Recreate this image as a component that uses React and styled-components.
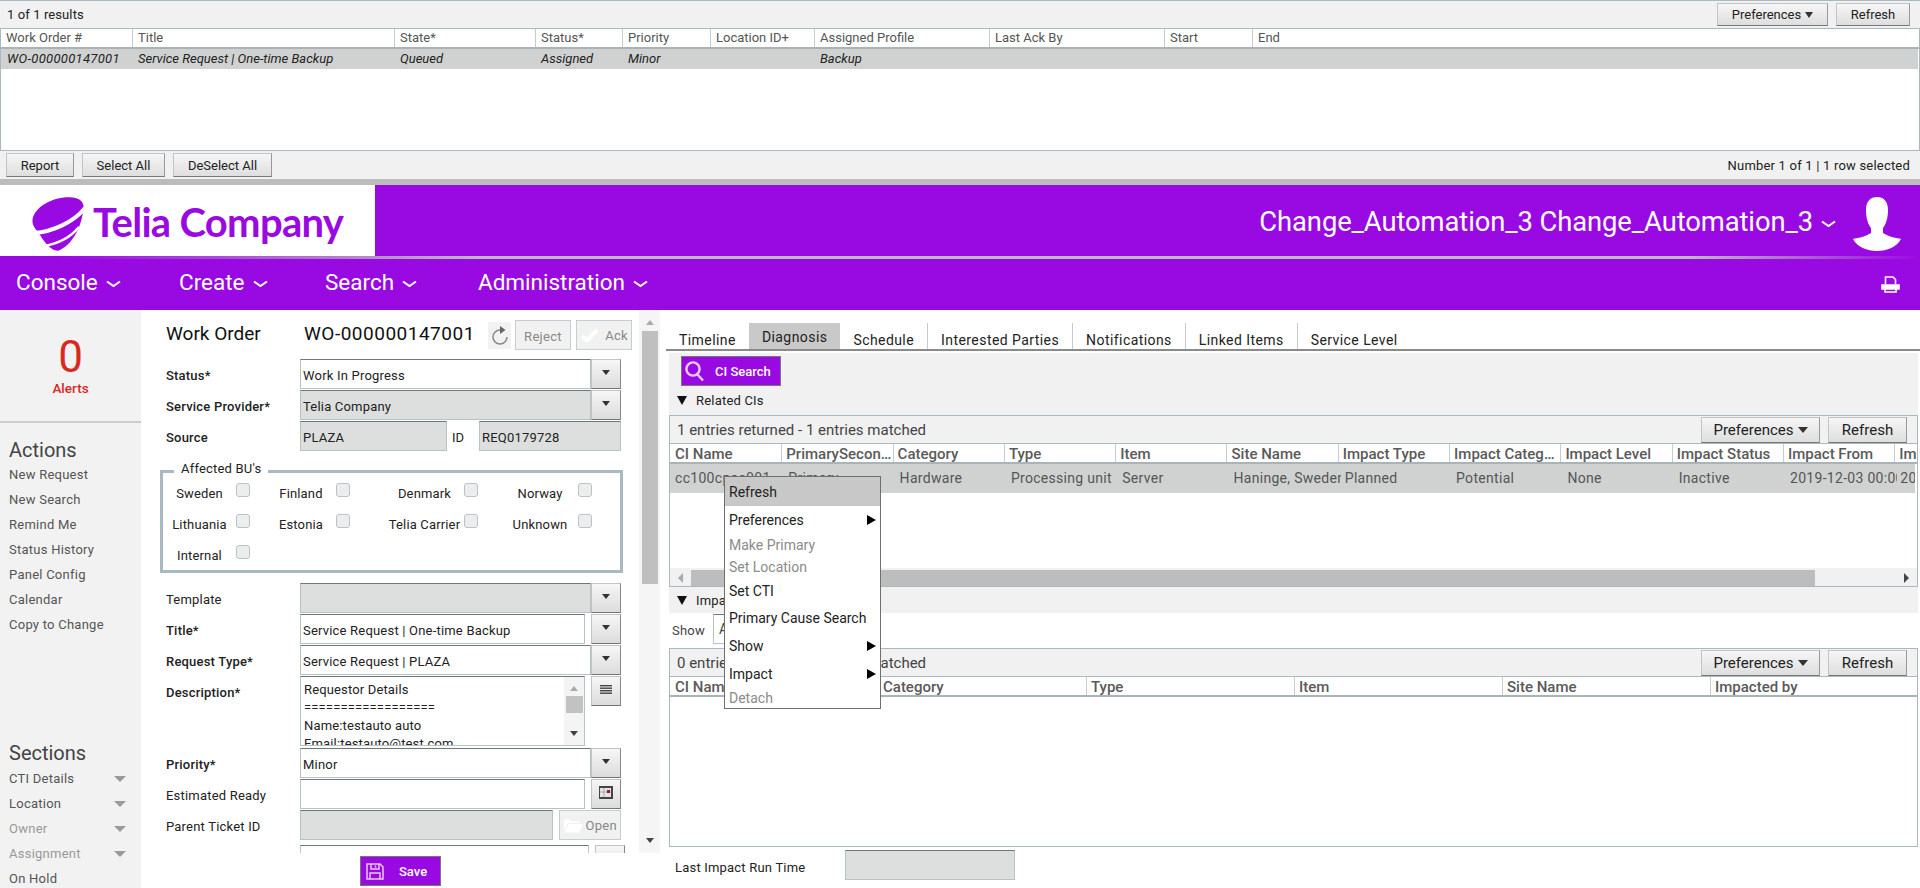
import styled, { createGlobalStyle } from 'styled-components';

const PURPLE = '#990ae3';

const GlobalStyle = createGlobalStyle`
  html, body { margin: 0; padding: 0; height: 888px; overflow: hidden; background: #fff; }
  body { font-family: Roboto, "Liberation Sans", sans-serif; font-size: 13px; color: #222; }
  * { box-sizing: border-box; }
`;

const Page = styled.div`
  width: 1920px;
  height: 888px;
  display: flex;
  flex-direction: column;
  overflow: hidden;
`;

/* results list on top */
const ResultsPanel = styled.section`
  height: 179px;
  display: flex;
  flex-direction: column;
  border-top: 1px solid #aab8c0;
`;

const ResultsBar = styled.div`
  height: 28px;
  flex: none;
  display: flex;
  align-items: center;
  justify-content: space-between;
  padding: 0 10px 0 7px;
  background: #f1f1f1;
  border-bottom: 1px solid #aab8c0;
  letter-spacing: 0.1px;
`;

const Buttons = styled.div`
  display: flex;
  gap: ${(p) => p.$gap || 8}px;
`;

const Button = styled.button`
  height: ${(p) => p.$h || 23}px;
  width: ${(p) => p.$w}px;
  padding: 0;
  font: ${(p) => p.$fs || 13}px Roboto, sans-serif;
  color: #222;
  background: linear-gradient(#f6f6f6, #dedede);
  border: 1px solid #c4c4c4;
  border-bottom-color: #777;
  border-right-color: #999;
  display: flex;
  align-items: center;
  justify-content: center;
  gap: 4px;
`;

const Caret = styled.span`
  display: inline-block;
  width: 0;
  height: 0;
  border-left: ${(p) => p.$s || 4}px solid transparent;
  border-right: ${(p) => p.$s || 4}px solid transparent;
  border-top: ${(p) => p.$t || p.$s || 5}px solid ${(p) => p.$c || '#333'};
`;

const ResultsHead = styled.div`
  height: 20px;
  flex: none;
  display: grid;
  grid-template-columns: ${(p) => p.$cols};
  border-bottom: 2px solid #a9b2b6;
  border-left: 1px solid #aab8c0;
  border-right: 1px solid #aab8c0;
`;

const ResultsHeadCell = styled.div`
  padding-left: 5px;
  line-height: 18px;
  color: #555;
  border-left: 1px solid #c3ccd0;
  &:first-child { border-left: 0; }
`;

const ResultsBody = styled.div`
  flex: 1;
  border: 1px solid #aab8c0;
  border-top: 0;
`;

const ResultsRow = styled.div`
  height: 20px;
  margin-right: 1px;
  display: grid;
  grid-template-columns: ${(p) => p.$cols};
  background: #d0d2d1;
`;

const ResultsCell = styled.div`
  padding-left: 6px;
  line-height: 20px;
  font-style: italic;
  color: #222;
  white-space: nowrap;
  overflow: hidden;
  &:first-child { letter-spacing: 0.3px; }
`;

const ResultsFoot = styled.div`
  height: 28px;
  flex: none;
  display: flex;
  align-items: center;
  justify-content: space-between;
  padding: 0 10px 0 6px;
  background: #f1f1f1;
  letter-spacing: 0.2px;
`;

const Rule = styled.div`
  height: 6px;
  flex: none;
  background: #bcbcbc;
`;

/* brand + nav */
const Brand = styled.header`
  height: 71px;
  flex: none;
  display: flex;
  background: ${PURPLE};
`;

const LogoBox = styled.div`
  width: 375px;
  background: #fff;
  display: flex;
  align-items: center;
  gap: 9px;
  padding: 3px 0 0 32px;
  svg { flex: none; margin-top: 3px; }
`;

const LogoText = styled.span`
  font-family: Lato, sans-serif;
  font-weight: 700;
  font-size: 40px;
  letter-spacing: -0.7px;
  color: ${PURPLE};
  line-height: 1;
`;

const UserArea = styled.div`
  flex: 1;
  display: flex;
  justify-content: flex-end;
  align-items: center;
  padding: 7px 19px 0 0;
  color: #fff;
  font-size: 27.4px;
`;

const UserName = styled.span`
  margin-right: 8px;
  margin-top: -4px;
  letter-spacing: -0.1px;
`;

const Chevron = styled.svg`
  flex: none;
  fill: none;
  stroke: #fff;
  stroke-width: 2;
`;

const UserGap = styled.span`
  width: 17px;
  flex: none;
`;

const Fade = styled.div`
  height: 3px;
  flex: none;
  background: linear-gradient(90deg, ${PURPLE} 3%, #bcbcbc 25%, #bcbcbc 88%, ${PURPLE} 100%);
`;

const Nav = styled.nav`
  height: 51px;
  flex: none;
  background: ${PURPLE};
  display: flex;
  align-items: center;
  padding: 0 20px 6px 16px;
  color: #fff;
  font-size: 22.5px;
`;

const NavItem = styled.div`
  width: ${(p) => p.$w}px;
  display: flex;
  align-items: center;
  gap: 8px;
  svg { margin-top: 5px; }
`;

const PrintIcon = styled.svg`
  margin-left: auto;
  margin-top: 6px;
`;

/* main part */
const Main = styled.main`
  flex: 1;
  display: flex;
  min-height: 0;
`;

const Sidebar = styled.aside`
  width: 141px;
  flex: none;
  background: #f2f2f2;
  color: #555;
`;

const AlertBox = styled.div`
  height: 113px;
  border-bottom: 2px solid #ccc;
  display: flex;
  flex-direction: column;
  align-items: center;
  color: #d8291f;
  padding-top: 25px;
`;

const AlertCount = styled.div`
  font-size: 44px;
  line-height: 44px;
`;

const AlertLabel = styled.div`
  font-weight: 500;
  font-size: 13.5px;
  margin-top: 1px;
`;

const SideHeading = styled.h3`
  margin: ${(p) => p.$top}px 0 ${(p) => p.$bottom || 0}px;
  padding-left: 9px;
  font-weight: 400;
  font-size: 20px;
  line-height: 26px;
  color: #444;
`;

const SideItem = styled.div`
  height: 25px;
  line-height: 25px;
  padding: 0 15px 0 9px;
  display: flex;
  align-items: center;
  justify-content: space-between;
  letter-spacing: 0.25px;
  color: ${(p) => (p.$off ? '#999' : '#555')};
`;

const FormColumn = styled.div`
  width: 519px;
  flex: none;
  display: flex;
  flex-direction: column;
`;

const FormBody = styled.div`
  height: 543px;
  flex: none;
  display: flex;
  overflow: hidden;
`;

const FormFields = styled.div`
  width: 498px;
  flex: none;
  padding: 10px 0 0 25px;
`;

const TitleRow = styled.div`
  display: flex;
  align-items: center;
  height: 30px;
  margin-bottom: 9px;
  font-size: 19px;
  color: #111;
`;

const TitleLabel = styled.div`
  width: 138px;
  flex: none;
  margin-top: -3px;
`;

const TitleNumber = styled.div`
  width: 184px;
  flex: none;
  margin-top: -3px;
  letter-spacing: 0.5px;
  white-space: nowrap;
`;

const IconBox = styled.div`
  width: 23px;
  height: 27px;
  margin-right: 4px;
  background: #f2f2f2;
  display: flex;
  align-items: center;
  justify-content: center;
`;

const GhostButton = styled.div`
  width: ${(p) => p.$w}px;
  height: 30px;
  margin-right: ${(p) => p.$mr || 0}px;
  border: 1px solid #c5cdd0;
  background: #f1f1f1;
  color: #888;
  font-size: 13px;
  letter-spacing: 0.3px;
  display: flex;
  align-items: center;
  justify-content: ${(p) => (p.$between ? 'space-between' : 'center')};
  padding: ${(p) => (p.$between ? '0 3px 0 3px' : '3px 0 0')};
`;

const Row = styled.div`
  display: flex;
  height: ${(p) => p.$h || 30}px;
  margin-bottom: ${(p) => p.$mb ?? 1}px;
`;

const Label = styled.label`
  width: 134px;
  flex: none;
  font-weight: ${(p) => (p.$bold ? 500 : 400)};
  line-height: 34px;
  color: #222;
  letter-spacing: 0.2px;
`;

const Field = styled.div`
  width: ${(p) => p.$w || 291}px;
  flex: none;
  padding: 0 2px;
  line-height: 31px;
  letter-spacing: 0.2px;
  white-space: nowrap;
  border: 1px solid #b7c2c6;
  border-top-color: #6d777c;
  background: ${(p) => (p.$off ? '#dcdfde' : '#fff')};
  color: #222;
  margin-right: ${(p) => p.$mr || 0}px;
`;

const SelectButton = styled.div`
  width: 30px;
  height: ${(p) => p.$h || 30}px;
  flex: none;
  padding-bottom: 4px;
  background: linear-gradient(#f6f6f6, #dcdcdc);
  border: 1px solid #c4c4c4;
  border-bottom-color: #6d777c;
  border-right-color: #888;
  display: flex;
  align-items: center;
  justify-content: center;
`;

const IdLabel = styled.div`
  width: 32px;
  flex: none;
  line-height: 34px;
  padding-left: 5px;
`;

const Fieldset = styled.fieldset`
  width: 463px;
  height: 112px;
  margin: 10px 0 10px -6px;
  padding: 0;
  border: 3px solid #a9b8c1;
`;

const Legend = styled.legend`
  margin-left: 11px;
  padding: 0 7px 4px;
  line-height: 16px;
  font-size: 13px;
  letter-spacing: 0.2px;
`;

const CheckGrid = styled.div`
  display: grid;
  grid-template-columns: 73px 14px 86px 14px 114px 14px 100px 14px;
  grid-auto-rows: 14px;
  row-gap: 17px;
  padding-top: 2px;
`;

const CheckLabel = styled.div`
  padding-left: ${(p) => p.$pad}px;
  text-align: center;
  line-height: 22px;
  white-space: nowrap;
  letter-spacing: 0.15px;
`;

const CheckBox = styled.div`
  width: 14px;
  height: 14px;
  background: #eceeee;
  border: 1px solid #b9c2c5;
  border-radius: 3px;
`;

const TextBlock = styled.div`
  width: 285px;
  height: 70px;
  flex: none;
  margin-right: 6px;
  display: flex;
  overflow: hidden;
  border: 1px solid #b7c2c6;
  border-top-color: #6d777c;
`;

const TextLines = styled.div`
  flex: 1;
  padding: 4px 0 0 3px;
  line-height: 18px;
  letter-spacing: 0.15px;
  white-space: nowrap;
`;

const MiniScroll = styled.div`
  width: 20px;
  flex: none;
  background: #f4f4f4;
  display: flex;
  flex-direction: column;
  align-items: center;
  padding-top: 9px;
  gap: 5px;
`;

const MiniThumb = styled.div`
  width: 17px;
  height: 17px;
  margin-bottom: 13px;
  background: #c2c2c2;
`;

const UpCaret = styled.span`
  width: 0;
  height: 0;
  border-left: 4px solid transparent;
  border-right: 4px solid transparent;
  border-bottom: 5px solid ${(p) => p.$c || '#aaa'};
`;

const FormScroll = styled.div`
  width: 21px;
  flex: none;
  background: #f5f5f5;
  display: flex;
  flex-direction: column;
  align-items: center;
  padding-top: 10px;
`;

const FormThumb = styled.div`
  width: 16px;
  height: 253px;
  margin: 6px 0 254px;
  background: #bfbfbf;
`;

const SaveBar = styled.div`
  flex: 1;
  display: flex;
  justify-content: center;
  padding-top: 3px;
`;

const PurpleButton = styled.button`
  width: ${(p) => p.$w}px;
  height: 30px;
  padding: 0 0 0 ${(p) => p.$pl}px;
  background: ${PURPLE};
  border: 1px solid #777;
  color: #fff;
  font: 500 13px Roboto, sans-serif;
  display: flex;
  align-items: center;
  gap: ${(p) => p.$gap}px;
`;

/* right part */
const RightColumn = styled.div`
  flex: 1;
  position: relative;
  padding: 13px 2px 0 6px;
  min-width: 0;
`;

const Tabs = styled.div`
  height: 28px;
  margin-right: -2px;
  display: flex;
  align-items: flex-end;
  border-bottom: 2px solid #8a8a8a;
`;

const Tab = styled.div`
  height: 26px;
  padding: ${(p) => (p.$on ? '4px 13px 0' : '7px 13px 0')};
  font-size: 14px;
  line-height: 20px;
  color: #222;
  letter-spacing: 0.43px;
  background: ${(p) => (p.$on ? '#c9c9c9' : 'transparent')};
  border-right: ${(p) => (p.$on || p.$plain ? '0' : '1px solid #c9c9c9')};
  white-space: nowrap;
`;

const RelatedPanel = styled.div`
  margin: 2px 0 0 3px;
  height: 260px;
  background: #f1f1f1;
  padding-top: 3px;
`;

const SearchRow = styled.div`
  padding-left: 12px;
  height: 30px;
`;

const SectionTitle = styled.div`
  display: flex;
  align-items: center;
  gap: 9px;
  height: ${(p) => p.$h}px;
  padding-left: 8px;
  letter-spacing: 0.2px;
  color: #222;
`;

const Triangle = styled.span`
  width: 0;
  height: 0;
  border-left: 5px solid transparent;
  border-right: 5px solid transparent;
  border-top: 9px solid #111;
`;

const Grid = styled.div`
  height: ${(p) => p.$h}px;
  display: flex;
  flex-direction: column;
  border: 1px solid #aab8c0;
  background: #fff;
`;

const GridBar = styled.div`
  height: 28px;
  flex: none;
  background: #f1f1f1;
  display: flex;
  align-items: center;
  justify-content: space-between;
  padding: 0 10px 0 7px;
  font-size: 15px;
  color: #444;
  border-bottom: 1px solid #aab8c0;
`;

const GridHead = styled.div`
  height: 20px;
  flex: none;
  display: grid;
  grid-template-columns: ${(p) => p.$cols};
  border-bottom: 2px solid #aab3b7;
  overflow: hidden;
`;

const HeadCell = styled.div`
  padding-left: 4px;
  padding-right: 1px;
  font-size: 15px;
  font-weight: 500;
  line-height: 21px;
  color: #5a5a5a;
  white-space: nowrap;
  overflow: hidden;
  text-overflow: ellipsis;
  border-left: 1px solid #c3ccd0;
  &:first-child { border-left: 0; padding-left: 5px; }
  &:nth-child(12) { text-overflow: clip; padding-right: 0; }
`;

const GridBody = styled.div`
  flex: 1;
  min-height: 0;
`;

const GridRow = styled.div`
  height: 29px;
  margin-right: 2px;
  display: grid;
  grid-template-columns: ${(p) => p.$cols};
  background: #d0d2d1;
  overflow: hidden;
`;

const RowCell = styled.div`
  padding-left: 7px;
  margin-right: -3px;
  font-size: 14px;
  line-height: 29px;
  letter-spacing: 0.3px;
  color: #555;
  white-space: nowrap;
  overflow: hidden;
  &:first-child { padding-left: 5px; }
  &:last-child { margin-right: 0; padding-left: 6px; }
`;

const HScroll = styled.div`
  height: 18px;
  flex: none;
  background: #f1f1f1;
  display: flex;
  align-items: flex-end;
`;

const ArrowSlot = styled.div`
  width: 21px;
  height: 16px;
  flex: none;
  display: flex;
  align-items: center;
  justify-content: center;
  margin-left: ${(p) => (p.$end ? 'auto' : 0)};
`;

const HThumb = styled.div`
  width: 1124px;
  height: 16px;
  background: #bdbdbd;
`;

const SideCaret = styled.span`
  width: 0;
  height: 0;
  border-top: 5px solid transparent;
  border-bottom: 5px solid transparent;
  ${(p) => (p.$left ? `border-right: 5px solid ${p.$c};` : `border-left: 5px solid ${p.$c};`)}
`;

const ShowRow = styled.div`
  height: 30px;
  margin: 2px 0 3px 3px;
  display: flex;
  align-items: center;
  padding-left: 3px;
  color: #444;
  letter-spacing: 0.2px;
`;

const ShowSelect = styled.div`
  width: 150px;
  height: 30px;
  margin-left: 8px;
  margin-top: -2px;
  padding-left: 5px;
  line-height: 28px;
  border: 1px solid #b7c2c6;
  border-top-color: #6d777c;
  font-size: 14px;
`;

const ImpactWrap = styled.div`
  margin-left: 3px;
`;

const LastRunRow = styled.div`
  margin: 3px 0 0 9px;
  display: flex;
  align-items: center;
  letter-spacing: 0.2px;
`;

const LastRunLabel = styled.div`
  width: 170px;
  flex: none;
  padding-top: 4px;
`;

const LastRunField = styled.div`
  width: 170px;
  height: 30px;
  background: #dcdfde;
  border: 1px solid #b7c2c6;
  border-top-color: #6d777c;
`;

const ContextMenu = styled.div`
  position: absolute;
  left: 64px;
  top: 166px;
  width: 157px;
  background: #fff;
  border: 1px solid #6f6f6f;
  z-index: 5;
`;

const MenuItem = styled.div`
  height: ${(p) => p.$h}px;
  padding: 0 3px 0 4px;
  display: flex;
  align-items: center;
  justify-content: space-between;
  font-size: 14px;
  color: ${(p) => (p.$off ? '#8b8b8b' : '#222')};
  background: ${(p) => (p.$hot ? '#c8c8c8' : 'transparent')};
`;

const MenuArrow = styled.span`
  width: 0;
  height: 0;
  margin-right: 1px;
  border-top: 5px solid transparent;
  border-bottom: 5px solid transparent;
  border-left: 9px solid #000;
`;

const resultCols = '131px 262px 141px 87px 88px 104px 175px 175px 88px 1fr';
const resultHeads = ['Work Order #', 'Title', 'State*', 'Status*', 'Priority', 'Location ID+', 'Assigned Profile', 'Last Ack By', 'Start', 'End'];
const resultRow = ['WO-000000147001', 'Service Request | One-time Backup', 'Queued', 'Assigned', 'Minor', '', 'Backup', '', '', ''];

const ciCols = 'repeat(11, 111.3px) 1fr';
const ciHeads = ['CI Name', 'PrimarySecondary', 'Category', 'Type', 'Item', 'Site Name', 'Impact Type', 'Impact Category', 'Impact Level', 'Impact Status', 'Impact From', 'Impact To'];
const ciRow = ['cc100cpac001', 'Primary', 'Hardware', 'Processing unit', 'Server', 'Haninge, Sweden', 'Planned', 'Potential', 'None', 'Inactive', '2019-12-03 00:00', '2019-12-03'];

const impactCols = 'repeat(5, 208px) 1fr';
const impactHeads = ['CI Name', 'Category', 'Type', 'Item', 'Site Name', 'Impacted by'];

const regions = [
  ['Sweden', 0], ['Finland', 16], ['Denmark', 35], ['Norway', 24],
  ['Lithuania', 0], ['Estonia', 16], ['Telia Carrier', 35], ['Unknown', 24],
  ['Internal', 0],
];

const menuItems = [
  { text: 'Refresh', h: 29, hot: true },
  { text: 'Preferences', h: 28, more: true },
  { text: 'Make Primary', h: 22, off: true },
  { text: 'Set Location', h: 21, off: true },
  { text: 'Set CTI', h: 27 },
  { text: 'Primary Cause Search', h: 28 },
  { text: 'Show', h: 28, more: true },
  { text: 'Impact', h: 28, more: true },
  { text: 'Detach', h: 20, off: true },
];

function Down({ w = 15, h = 8 }) {
  return (
    <Chevron width={w} height={h} viewBox="0 0 15 8">
      <path d="M1 1.5 L7.5 6 L14 1.5" />
    </Chevron>
  );
}

function TeliaMark() {
  return (
    <svg width="52" height="54" viewBox="0 0 52 54">
      <path fill={PURPLE} d="M0.5 23 C2 10 22 -1 40 0.5 C48 1 52 5 51.5 11 C50 28 42 46 28 53 C22 56 14 48 8 38 C4 32 0 29 0.5 23 Z" />
      <path fill="none" stroke="#fff" strokeWidth="4" d="M2 36 C20 35 42 25 53 11" />
      <path fill="none" stroke="#fff" strokeWidth="2.6" d="M12 49 C24 47 38 41 47 30" />
    </svg>
  );
}

function UserIcon() {
  return (
    <svg width="48" height="54" viewBox="0 0 48 54" fill="#fff">
      <path d="M24 0 C32 0 35 6 35 13 C35 21 33 27 30 31 L30 36 C36 40 44 41 48 42 C44 50 34 54 24 54 C14 54 4 50 0 42 C4 41 12 40 18 36 L18 31 C15 27 13 21 13 13 C13 6 16 0 24 0 Z" />
    </svg>
  );
}

function Printer() {
  return (
    <PrintIcon width="19" height="17" viewBox="0 0 19 17" fill="none" stroke="#fff" strokeWidth="1.6">
      <path d="M4.5 8 V1 H12 L14.5 3.5 V8" />
      <path d="M1 9 H18 V13 H1 Z" fill="#fff" />
      <path d="M4 13 V16 H15 V13" />
    </PrintIcon>
  );
}

function RefreshGlyph() {
  return (
    <svg width="16" height="20" viewBox="0 0 16 20" fill="none" stroke="#888" strokeWidth="1.5">
      <path d="M8 5 A7 7 0 1 0 15 12" />
      <path d="M8 1 L13.5 5 L8 9 Z" fill="#666" stroke="none" />
    </svg>
  );
}

function CheckGlyph() {
  return (
    <svg width="19" height="15" viewBox="0 0 18 15" fill="none" stroke="#fff" strokeWidth="4">
      <path d="M1.5 8 L6.5 12.5 L16.5 2" />
    </svg>
  );
}

function ListGlyph() {
  return (
    <svg width="12" height="9" viewBox="0 0 12 9" fill="#444">
      <rect width="12" height="1.4" />
      <rect y="2.5" width="12" height="1.4" />
      <rect y="5" width="12" height="1.4" />
      <rect y="7.5" width="12" height="1.4" />
    </svg>
  );
}

function CalendarGlyph() {
  return (
    <svg width="14" height="13" viewBox="0 0 14 13">
      <rect width="14" height="13" fill="#444" />
      <rect x="1" y="2" width="11" height="9" fill="#e4e4e4" />
      <path d="M5 2 V11 M1 6 H12" stroke="#aaa" strokeWidth="1" />
      <rect x="8" y="4" width="3" height="3" fill="#a0142a" />
    </svg>
  );
}

function FolderGlyph() {
  return (
    <svg width="20" height="16" viewBox="0 0 21 16" fill="#fff">
      <path d="M1 2 H7 L9 4 H18 V6 H5 L1 15 Z" />
      <path d="M6 7 H21 L17 16 H2 Z" />
    </svg>
  );
}

function SaveGlyph() {
  return (
    <svg width="18" height="17" viewBox="0 0 18 17" fill="none" stroke="#eac6fa" strokeWidth="1.5">
      <path d="M1 1 H14 L17 4 V16 H1 Z" />
      <path d="M5 1 V6 H13 V1 M9.5 2.5 V4.5" />
      <path d="M4 16 V10 H14 V16" />
    </svg>
  );
}

function SearchGlyph() {
  return (
    <svg width="20" height="21" viewBox="0 0 20 21" fill="none" stroke="#f0cfff" strokeWidth="2.4">
      <circle cx="8" cy="8" r="6.6" />
      <path d="M12.5 13.5 L18 19.5" />
    </svg>
  );
}

function ToolButtons({ big }) {
  return (
    <Buttons>
      <Button $w={big ? 119 : 111} $h={big ? 26 : 23} $fs={big ? 15 : 13}>
        Preferences <Caret $s={big ? 5 : 4} $t={6} />
      </Button>
      <Button $w={big ? 79 : 74} $h={big ? 26 : 23} $fs={big ? 15 : 13}>
        Refresh
      </Button>
    </Buttons>
  );
}

export default function App() {
  return (
    <Page>
      <GlobalStyle />

      <ResultsPanel>
        <ResultsBar>
          <span>1 of 1 results</span>
          <ToolButtons />
        </ResultsBar>
        <ResultsHead $cols={resultCols}>
          {resultHeads.map((h) => <ResultsHeadCell key={h}>{h}</ResultsHeadCell>)}
        </ResultsHead>
        <ResultsBody>
          <ResultsRow $cols={resultCols}>
            {resultRow.map((c, i) => <ResultsCell key={i}>{c}</ResultsCell>)}
          </ResultsRow>
        </ResultsBody>
        <ResultsFoot>
          <Buttons>
            <Button $w={68} $h={24}>Report</Button>
            <Button $w={83} $h={24}>Select All</Button>
            <Button $w={99} $h={24}>DeSelect All</Button>
          </Buttons>
          <span>Number 1 of 1 | 1 row selected</span>
        </ResultsFoot>
      </ResultsPanel>
      <Rule />

      <Brand>
        <LogoBox>
          <TeliaMark />
          <LogoText>Telia Company</LogoText>
        </LogoBox>
        <UserArea>
          <UserName>Change_Automation_3 Change_Automation_3</UserName>
          <Down />
          <UserGap />
          <UserIcon />
        </UserArea>
      </Brand>
      <Fade />
      <Nav>
        <NavItem $w={163}>Console <Down /></NavItem>
        <NavItem $w={146}>Create <Down /></NavItem>
        <NavItem $w={153}>Search <Down /></NavItem>
        <NavItem $w={200}>Administration <Down /></NavItem>
        <Printer />
      </Nav>

      <Main>
        <Sidebar>
          <AlertBox>
            <AlertCount>0</AlertCount>
            <AlertLabel>Alerts</AlertLabel>
          </AlertBox>
          <SideHeading $top={14} $bottom={-1}>Actions</SideHeading>
          {['New Request', 'New Search', 'Remind Me', 'Status History', 'Panel Config', 'Calendar', 'Copy to Change'].map((t) => (
            <SideItem key={t}>{t}</SideItem>
          ))}
          <SideHeading $top={103}>Sections</SideHeading>
          <SideItem>CTI Details <Caret $s={6} $c="#999" /></SideItem>
          <SideItem>Location <Caret $s={6} $c="#999" /></SideItem>
          <SideItem $off>Owner <Caret $s={6} $c="#999" /></SideItem>
          <SideItem $off>Assignment <Caret $s={6} $c="#999" /></SideItem>
          <SideItem>On Hold</SideItem>
        </Sidebar>

        <FormColumn>
          <FormBody>
            <FormFields>
              <TitleRow>
                <TitleLabel>Work Order</TitleLabel>
                <TitleNumber>WO-000000147001</TitleNumber>
                <IconBox><RefreshGlyph /></IconBox>
                <GhostButton $w={56} $mr={5}>Reject</GhostButton>
                <GhostButton $w={56} $between><CheckGlyph />Ack</GhostButton>
              </TitleRow>

              <Row>
                <Label $bold>Status*</Label>
                <Field>Work In Progress</Field>
                <SelectButton><Caret /></SelectButton>
              </Row>
              <Row>
                <Label $bold>Service Provider*</Label>
                <Field $off>Telia Company</Field>
                <SelectButton><Caret /></SelectButton>
              </Row>
              <Row $mb={0}>
                <Label $bold>Source</Label>
                <Field $off $w={147}>PLAZA</Field>
                <IdLabel>ID</IdLabel>
                <Field $off $w={142}>REQ0179728</Field>
              </Row>

              <Fieldset>
                <Legend>Affected BU's</Legend>
                <CheckGrid>
                  {regions.map(([name, pad]) => [
                    <CheckLabel key={name} $pad={pad}>{name}</CheckLabel>,
                    <CheckBox key={`${name}-box`} />,
                  ])}
                </CheckGrid>
              </Fieldset>

              <Row>
                <Label>Template</Label>
                <Field $off />
                <SelectButton><Caret /></SelectButton>
              </Row>
              <Row>
                <Label $bold>Title*</Label>
                <Field $w={285} $mr={6}>Service Request | One-time Backup</Field>
                <SelectButton><Caret /></SelectButton>
              </Row>
              <Row>
                <Label $bold>Request Type*</Label>
                <Field>Service Request | PLAZA</Field>
                <SelectButton><Caret /></SelectButton>
              </Row>
              <Row $h={70} $mb={2}>
                <Label $bold>Description*</Label>
                <TextBlock>
                  <TextLines>
                    Requestor Details<br />
                    ==================<br />
                    Name:testauto auto<br />
                    Email:testauto@test.com
                  </TextLines>
                  <MiniScroll>
                    <UpCaret />
                    <MiniThumb />
                    <Caret $c="#444" />
                  </MiniScroll>
                </TextBlock>
                <SelectButton><ListGlyph /></SelectButton>
              </Row>
              <Row>
                <Label $bold>Priority*</Label>
                <Field>Minor</Field>
                <SelectButton><Caret /></SelectButton>
              </Row>
              <Row>
                <Label>Estimated Ready</Label>
                <Field $w={285} $mr={6} />
                <SelectButton><CalendarGlyph /></SelectButton>
              </Row>
              <Row $mb={5}>
                <Label>Parent Ticket ID</Label>
                <Field $off $w={253} $mr={6} />
                <GhostButton $w={62} $between><FolderGlyph />Open</GhostButton>
              </Row>
              <Row>
                <Label />
                <Field $w={289} $mr={6} />
                <SelectButton />
              </Row>
            </FormFields>
            <FormScroll>
              <UpCaret />
              <FormThumb />
              <Caret $c="#444" />
            </FormScroll>
          </FormBody>
          <SaveBar>
            <PurpleButton $w={81} $pl={5} $gap={15}><SaveGlyph />Save</PurpleButton>
          </SaveBar>
        </FormColumn>

        <RightColumn>
          <Tabs>
            <Tab $plain>Timeline</Tab>
            <Tab $on>Diagnosis</Tab>
            <Tab>Schedule</Tab>
            <Tab>Interested Parties</Tab>
            <Tab>Notifications</Tab>
            <Tab>Linked Items</Tab>
            <Tab $plain>Service Level</Tab>
          </Tabs>

          <RelatedPanel>
            <SearchRow>
              <PurpleButton $w={100} $pl={3} $gap={10}><SearchGlyph />CI Search</PurpleButton>
            </SearchRow>
            <SectionTitle $h={29}><Triangle />Related CIs</SectionTitle>
            <Grid $h={172}>
              <GridBar>
                <span>1 entries returned - 1 entries matched</span>
                <ToolButtons big />
              </GridBar>
              <GridHead $cols={ciCols}>
                {ciHeads.map((h) => <HeadCell key={h}>{h}</HeadCell>)}
              </GridHead>
              <GridBody>
                <GridRow $cols={ciCols}>
                  {ciRow.map((c, i) => <RowCell key={i}>{c}</RowCell>)}
                </GridRow>
              </GridBody>
              <HScroll>
                <ArrowSlot><SideCaret $left $c="#aaa" /></ArrowSlot>
                <HThumb />
                <ArrowSlot $end><SideCaret $c="#444" /></ArrowSlot>
              </HScroll>
            </Grid>
            <SectionTitle $h={26}><Triangle />Impacted CIs</SectionTitle>
          </RelatedPanel>

          <ShowRow>
            Show
            <ShowSelect>All</ShowSelect>
          </ShowRow>

          <ImpactWrap>
            <Grid $h={199}>
              <GridBar>
                <span>0 entries returned - 0 entries matched</span>
                <ToolButtons big />
              </GridBar>
              <GridHead $cols={impactCols}>
                {impactHeads.map((h) => <HeadCell key={h}>{h}</HeadCell>)}
              </GridHead>
              <GridBody />
            </Grid>
          </ImpactWrap>

          <LastRunRow>
            <LastRunLabel>Last Impact Run Time</LastRunLabel>
            <LastRunField />
          </LastRunRow>

          <ContextMenu>
            {menuItems.map((m) => (
              <MenuItem key={m.text} $h={m.h} $off={m.off} $hot={m.hot}>
                {m.text}
                {m.more && <MenuArrow />}
              </MenuItem>
            ))}
          </ContextMenu>
        </RightColumn>
      </Main>
    </Page>
  );
}
